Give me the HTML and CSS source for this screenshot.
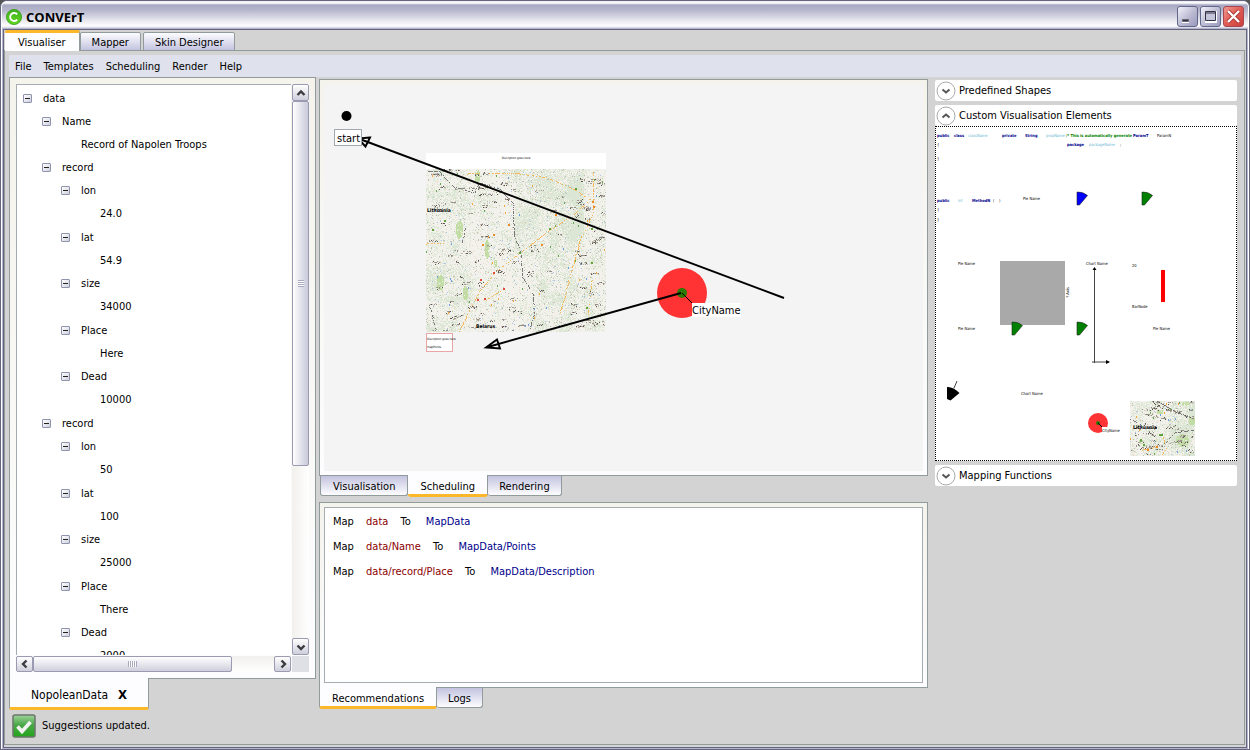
FILE: index.html
```html
<!DOCTYPE html>
<html lang="en">
<head>
<meta charset="utf-8">
<title>CONVErT</title>
<link rel="stylesheet" href="styles.css">
</head>
<body>
<div class="window">
  <header class="titlebar">
    <svg class="logo" width="16" height="16" viewBox="0 0 16 16"><defs><linearGradient id="lg" x2="0" y2="1"><stop offset="0" stop-color="#3fae1c"/><stop offset="1" stop-color="#62d820"/></linearGradient></defs><circle cx="8" cy="8" r="7.6" fill="url(#lg)" stroke="#3a9a20" stroke-width=".8"/><path d="M11.2 5.4A4 4 0 1 0 11.2 10.6" fill="none" stroke="#fff" stroke-width="1.9"/></svg>
    <h1>CONVErT</h1>
    <div class="winbtns">
      <button aria-label="Minimize"><svg width="19" height="19"><path d="M4 13h7v3H4z" fill="#fff"/><path d="M4.500 12.500h6v2h-6z" fill="#334" stroke="#667"/></svg></button>
      <button aria-label="Maximize"><svg width="19" height="19"><path d="M4 4h12v12H4z" fill="#fff"/><path d="M4.500 4.500h10v9h-10zM4 6h11" fill="#c4c4da" stroke="#334"/></svg></button>
      <button class="close" aria-label="Close"><svg width="19" height="19"><path d="M4 4l11 11M15 4L4 15" stroke="#a33" stroke-width="4"/><path d="M4 4l11 11M15 4L4 15" stroke="#fff" stroke-width="2.400"/></svg></button>
    </div>
  </header>
  <div class="client">
    <nav class="toptabs">
      <button class="on">Visualiser</button><button>Mapper</button><button>Skin Designer</button>
    </nav>
    <div class="page">
      <nav class="menu"><button>File</button><button>Templates</button><button>Scheduling</button><button>Render</button><button>Help</button></nav>
      <main class="cols">
        <section class="left">
          <div class="panel treepanel">
            <div class="tree">
              <ul>
                <li><button class="tg" aria-label="Collapse"></button><span>data</span>
                  <ul>
                    <li><button class="tg" aria-label="Collapse"></button><span>Name</span><ul><li><span>Record of Napolen Troops</span></li></ul></li>
                    <li><button class="tg" aria-label="Collapse"></button><span>record</span>
                      <ul class="fields">
                        <li><button class="tg" aria-label="Collapse"></button><span>lon</span><ul><li><span>24.0</span></li></ul></li>
                        <li><button class="tg" aria-label="Collapse"></button><span>lat</span><ul><li><span>54.9</span></li></ul></li>
                        <li><button class="tg" aria-label="Collapse"></button><span>size</span><ul><li><span>34000</span></li></ul></li>
                        <li><button class="tg" aria-label="Collapse"></button><span>Place</span><ul><li><span>Here</span></li></ul></li>
                        <li><button class="tg" aria-label="Collapse"></button><span>Dead</span><ul><li><span>10000</span></li></ul></li>
                      </ul></li>
                    <li><button class="tg" aria-label="Collapse"></button><span>record</span>
                      <ul class="fields">
                        <li><button class="tg" aria-label="Collapse"></button><span>lon</span><ul><li><span>50</span></li></ul></li>
                        <li><button class="tg" aria-label="Collapse"></button><span>lat</span><ul><li><span>100</span></li></ul></li>
                        <li><button class="tg" aria-label="Collapse"></button><span>size</span><ul><li><span>25000</span></li></ul></li>
                        <li><button class="tg" aria-label="Collapse"></button><span>Place</span><ul><li><span>There</span></li></ul></li>
                        <li><button class="tg" aria-label="Collapse"></button><span>Dead</span><ul><li><span>2000</span></li></ul></li>
                      </ul></li>
                  </ul></li>
              </ul>
            </div>
            <div class="vbar">
              <button class="sb" aria-label="Scroll up"><svg width="10" height="10"><path d="M1.500 7L5 3.500 8.500 7" /></svg></button>
              <div class="thumb"><i></i></div>
              <div class="rest"></div>
              <button class="sb" aria-label="Scroll down"><svg width="10" height="10"><path d="M1.500 3.500L5 7 8.500 3.500" /></svg></button>
            </div>
            <div class="hbar">
              <button class="sb" aria-label="Scroll left"><svg width="10" height="10"><path d="M6.500 1.500L3 5 6.500 8.500" /></svg></button>
              <div class="thumb"><i></i></div>
              <div class="rest"></div>
              <button class="sb" aria-label="Scroll right"><svg width="10" height="10"><path d="M3.500 1.500L7 5 3.500 8.500" /></svg></button>
            </div>
            <div class="corner"></div>
          </div>
          <div class="filetab"><span>NopoleanData</span><button aria-label="Close NopoleanData">X</button></div>
          <div class="status">
            <svg width="24" height="24" viewBox="0 0 24 24"><defs><linearGradient id="ok" x2="0" y2="1"><stop offset="0" stop-color="#9fd49c"/><stop offset=".45" stop-color="#4aa848"/><stop offset="1" stop-color="#22a51a"/></linearGradient></defs><rect x="1" y="1" width="22" height="22" rx="2" fill="url(#ok)" stroke="#6c756c" stroke-width="1.500"/><path d="M5.500 12.500L10 17.500 18.500 8" fill="none" stroke="#f2f2f2" stroke-width="3.600"/></svg>
            <span>Suggestions updated.</span>
          </div>
        </section>
        <section class="center">
          <div class="panel canvaspanel">
            <div class="canvas">
              <svg width="600" height="387" viewBox="324 84 600 387">
                <circle cx="346.500" cy="116" r="5"/>
                <rect x="426" y="153" width="180" height="16" fill="#fff"/>
                <text class="tiny" x="516" y="159" text-anchor="middle">Discription goes here</text>
                <g id="mapLarge" transform="translate(426 169)"></g>
                <rect x="426.500" y="333.500" width="26" height="18" fill="#fff" stroke="#eba5a5"/>
                <text class="tiny" x="427" y="340">Discription goes here</text>
                <text class="tiny" x="427" y="348">mapPoints</text>
                <circle cx="682" cy="293" r="25" fill="#ff3333"/>
                <circle cx="682" cy="293" r="5" fill="#2d7a00"/>
                <path d="M682 293l10 10" stroke="#000"/>
                <rect x="692" y="303" width="49" height="14" fill="#fff"/>
                <text class="lbl" x="692" y="314">CityName</text>
                <path d="M784 298L361 139.500M370 137.500L358 138.500 365.500 146.500zM681 293L486 347.500M497 339.500L486 347.500 500 348.500z" fill="none" stroke="#000" stroke-width="1.900"/>
                <rect x="334.500" y="129.500" width="27" height="16" fill="#fff" stroke="#a3a8ae"/>
                <text class="lbl" x="337" y="142">start</text>
              </svg>
            </div>
          </div>
          <nav class="bottabs midtabs"><button>Visualisation</button><button class="on">Scheduling</button><button>Rendering</button></nav>
          <div class="panel recpanel">
            <div class="recs">
              <p>Map <b>data</b> To <em>MapData</em></p>
              <p>Map <b>data/Name</b> To <em>MapData/Points</em></p>
              <p>Map <b>data/record/Place</b> To <em>MapData/Description</em></p>
            </div>
          </div>
          <nav class="bottabs rectabs"><button class="on">Recommendations</button><button>Logs</button></nav>
        </section>
        <aside class="right">
          <button class="exp"><svg width="20" height="20"><circle cx="10" cy="10" r="9"/><path d="M6.500 8.500L10 11.500 13.500 8.500"/></svg>Predefined Shapes</button>
          <div class="group">
            <button class="exp"><svg width="20" height="20"><circle cx="10" cy="10" r="9"/><path d="M6.500 11.500L10 8.500 13.500 11.500"/></svg>Custom Visualisation Elements</button>
            <div class="palette">
              <svg class="shapes" viewBox="1 1 300 333" width="300" height="333">
                <g class="kw"><text x="2" y="11">public</text><text x="19" y="11">class</text><text x="67" y="11">private</text><text x="90" y="11">String</text><text x="198" y="11">ParamT</text><text x="132" y="20">package</text><text x="2" y="76">public</text><text x="37" y="76">MethodN</text></g>
                <g class="id"><text x="33" y="11">className</text><text x="111" y="11">propName</text><text x="154" y="20">packageName</text><text x="23" y="76">int</text></g>
                <text class="cm" x="131" y="11">/* This is automatically generate</text>
                <g class="nm"><text x="222" y="11">ParamN</text><text x="185" y="20">;</text><text x="2" y="20">{</text><text x="2" y="34">}</text><text x="58" y="76">(</text><text x="64" y="76">)</text><text x="2" y="85">{</text><text x="2" y="95">}</text>
                <text x="88" y="74">Pie Name</text><text x="23" y="139">Pie Name</text><text x="23" y="204">Pie Name</text><text x="218" y="204">Pie Name</text><text x="151" y="139">Chart Name</text><text x="86" y="269">Chart Name</text><text x="197" y="141">20</text><text x="197" y="182">BarNode</text><text transform="translate(134 172) rotate(-90)">Y Axis</text></g>
                <rect x="65" y="135" width="65" height="64" fill="#a9a9a9"/>
                <g stroke="#222" stroke-width=".6"><path d="M142 66q6-.5 10.500 3.500l-8 9.500h-2.500z" fill="#00f"/><path d="M207 66q6-.5 10.500 3.500l-8 9.500h-2.500z" fill="#008000"/><path d="M77 196q6-.5 10.500 3.500l-8 9.500h-2.500z" fill="#008000"/><path d="M142 196q6-.5 10.500 3.500l-8 9.500h-2.500z" fill="#008000"/></g>
                <path d="M12 261q6-.5 12.500 6l-9 7.500-3.500-1.500z"/><path d="M19 262l3-7M159.500 237v-93M157 236h17" fill="none" stroke="#444"/>
                <path d="M157.500 144l2-3 2 3zM171 234l4 2-4 2z"/>
                <rect x="226" y="144" width="4" height="32" fill="#f00"/>
                <circle cx="163" cy="297" r="10" fill="#ff3333"/><circle cx="163" cy="297" r="2" fill="#2d7a00"/><path d="M163 297l4 4" stroke="#000"/><path d="M167 301h20v6h-20z" fill="#fff"/>
                <g class="nm"><text x="167" y="306">CityName</text></g>
                <g id="mapSmall" transform="translate(195 275)"></g>
              </svg>
            </div>
          </div>
          <button class="exp"><svg width="20" height="20"><circle cx="10" cy="10" r="9"/><path d="M6.500 8.500L10 11.500 13.500 8.500"/></svg>Mapping Functions</button>
        </aside>
      </main>
    </div>
  </div>
</div>
<script src="map.js"></script>
</body>
</html>
```
FILE: styles.css
```css
* { box-sizing: border-box; }
body { margin: 0; background: #555; font: 11px/14px "DejaVu Sans Condensed", "DejaVu Sans", sans-serif; color: #000; }
button { font: inherit; color: inherit; border: 0; background: none; padding: 0; margin: 0; }
svg { display: block; flex: none; }
ul { list-style: none; margin: 0; padding: 0; }
.window { display: flex; flex-direction: column; height: 100vh; min-height: 600px; border: 1px solid #65657f; border-radius: 7px 7px 0 0; background: #fff; padding: 0 1px 1px; }
.titlebar { display: flex; align-items: center; gap: 4px; height: 28px; padding: 3px 4px 0; border-radius: 6px 6px 0 0; background: linear-gradient(#e8e8f2 0, #fff 2px, #a8a8c3 4px, #b5b5cc 9px, #e5e5ec 19px, #fff 25px, #d0d0e0 27px, #9a9ab6 28px); }
.titlebar h1 { flex: 1; margin: 0; font: bold 13px/16px "Open Sans", "Noto Sans", sans-serif; }
.winbtns { display: flex; gap: 2px; }
.winbtns button { width: 21px; height: 21px; border: 1px solid #62678c; border-radius: 3px; background: linear-gradient(135deg, #f2f2fa, #b9b9d2 55%, #9a9abc); }
.winbtns .close { border-color: #a8474f; background: linear-gradient(135deg, #ef9a93, #e05b55 50%, #c93f3f); }
.client { flex: 1; min-height: 0; display: flex; flex-direction: column; border: 1px solid #65657f; outline: 1px solid #b4b4cc; background: #d3d3d3; margin: 0 1px; padding: 0 1px 2px 0; }
.toptabs { display: flex; align-items: flex-end; gap: 2px; height: 21px; margin-bottom: -1px; padding-left: 1px; z-index: 1; }
.toptabs button { height: 19px; padding: 2px 11px 0; border: 1px solid #919b9c; border-radius: 2px 2px 0 0; background: linear-gradient(#fdfdff, #c3c3e0); }
.toptabs .on { height: 21px; padding: 2px 13px 0; margin-right: -2px; border-width: 0 1px 0 0; border-top: 3px solid #fdb72b; background: #fdfdff; }
.page { flex: 1; min-height: 0; display: flex; flex-direction: column; border: 1px solid #919b9c; padding: 4px 3px 0 4px; }
.menu { display: flex; gap: 12px; height: 22px; padding: 1px 6px 0; background: #dfe2ec; }
.cols { flex: 1; min-height: 0; display: grid; grid-template-columns: 307px minmax(0, 1fr) 302px; column-gap: 3px; padding-right: 4px; }
.panel { border: 1px solid #919b9c; background: linear-gradient(#f4f3ec, #fdfdff); }
.left, .center { display: flex; flex-direction: column; min-height: 0; }
.treepanel { flex: 1; min-height: 0; display: grid; grid-template: minmax(0, 1fr) 17px / minmax(0, 1fr) 17px; padding: 6px; }
.tree { overflow: hidden; border: 1px solid #a5acb2; border-width: 1px 0 0 1px; background: #fff; padding: 2px 0 0 6px; margin-right: 1px; }
.tree span { display: inline-block; line-height: 23px; }
.tree ul ul { padding-left: 19px; }
.tree li { min-height: 23px; }
.tree li > span:first-child { margin-left: 20px; }
.fields > li:nth-child(odd) { padding-bottom: 1px; }
.tg { width: 9px; height: 9px; margin: 0 11px 2px 0; border: 1px solid #8e94ad; border-radius: 1px; background: linear-gradient(#222, #222) center / 5px 1px no-repeat, linear-gradient(135deg, #fff, #d0d0de); vertical-align: middle; }
.vbar { display: flex; flex-direction: column; background: linear-gradient(90deg, #f1f0ec, #fff); }
.hbar { display: flex; margin: 1px 1px 0 0; background: linear-gradient(#f1f0ec, #fff); }
.sb, .thumb { border: 1px solid #9a9ab0; border-radius: 2px; background: linear-gradient(#fff, #cfcfdd); display: flex; align-items: center; justify-content: center; flex: none; }
.vbar .sb { height: 17px; }
.hbar .sb { width: 17px; }
.sb path { fill: none; stroke: #3c3c40; stroke-width: 2.4; }
.vbar .thumb { flex: 364 0 0; background: linear-gradient(90deg, #fff, #c9c9da); }
.vbar .rest { flex: 173 0 0; }
.hbar .thumb { flex: 199 0 0; }
.hbar .rest { flex: 43 0 0; }
.thumb i { width: 9px; height: 6px; background: repeating-linear-gradient(90deg, #a9a9bd 0 1px, #fff 1px 2px); }
.vbar .thumb i { width: 6px; height: 7px; background: repeating-linear-gradient(#a9a9bd 0 1px, #fff 1px 2px); }
.corner { margin-top: 1px; background: #dfdfe6; }
.filetab { align-self: flex-start; display: flex; align-items: center; gap: 10px; height: 32px; margin-top: -1px; padding: 4px 21px 0; border: 1px solid #919b9c; border-width: 0 1px 3px; border-bottom-color: #fdb72b; border-radius: 0 0 2px 2px; background: #fdfdff; font-size: 12px; }
.filetab button { font-weight: bold; font-size: 13px; }
.status { display: flex; align-items: center; gap: 6px; height: 34px; padding: 0 3px 2px; }
.center { padding-top: 2px; margin-right: 4px; }
.canvaspanel { flex: 387 0 0; min-height: 0; padding: 4px; }
.canvas { height: 100%; overflow: hidden; background: #f4f4f4; }
.bottabs { display: flex; align-items: flex-start; margin-top: -1px; }
.bottabs button { height: 20px; padding: 3px 12px 0; margin-top: 1px; border: 1px solid #919b9c; border-top: 0; border-radius: 0 0 3px 3px; background: linear-gradient(#c3c3e0, #fdfdff); }
.bottabs button + button { border-left: 0; padding: 3px 11px 0; }
.bottabs button.on { height: 22px; margin-top: 0; border-bottom: 3px solid #fdb72b; background: #fdfdff; padding: 4px 12px 0; }
.midtabs { padding-left: 1px; height: 27px; }
.recpanel { flex: 176 0 0; min-height: 0; padding: 4px; }
.recs { height: 100%; border: 1px solid #a5acb2; background: #fff; padding: 1px 8px; }
.recs p { margin: 0; line-height: 25px; }
.recs b { font-weight: normal; color: #8b0000; margin: 0 9px; }
.recs em { font-style: normal; color: #00008b; margin-left: 12px; }
.rectabs { height: 57px; }
.right { display: flex; flex-direction: column; gap: 4px; padding-top: 3px; }
.exp { display: flex; align-items: center; gap: 3px; width: 100%; height: 21px; padding-left: 1px; border-radius: 2px; background: #fff; }
.exp circle { fill: #fff; stroke: #aaa; }
.exp path { fill: none; stroke: #555; stroke-width: 2; }
.palette { border: 1px dotted #000; background: #fff; overflow: hidden; }
.lbl { font-size: 11px; }
.tiny { font-size: 3px; }
.shapes { font-size: 4px; }
.kw { font-weight: bold; fill: #00008b; }
.id { fill: #6bb8d0; }
.cm { font-weight: bold; fill: #008000; }
.maptown { font-weight: bold; font-size: 5px; }
```
FILE: map.js
```js
const NS = 'http://www.w3.org/2000/svg';

function drawMap(id, w, h, opt) {
  const root = document.getElementById(id);
  let seed = opt.seed;
  const rnd = () => (seed = (seed * 16807) % 2147483647) / 2147483647;
  const layers = {};
  const dot = (c, x, y, l = 1, t = 1) => {
    if (x < 0 || y < 0 || x + l > w || y + t > h) return;
    layers[c] = (layers[c] || '') + `M${x | 0} ${y | 0}h${l}v${t}h-${l}z`;
  };
  // Smooth lattice noise shapes the forests.
  const grid = Array.from({ length: 1600 }, rnd);
  const noise = (x, y) => {
    const gx = x / 9, gy = y / 13, ix = gx | 0, iy = gy | 0, fx = gx - ix, fy = gy - iy;
    const g = (a, b) => grid[(a + b * 37) % 1600];
    return (g(ix, iy) * (1 - fx) + g(ix + 1, iy) * fx) * (1 - fy) + (g(ix, iy + 1) * (1 - fx) + g(ix + 1, iy + 1) * fx) * fy;
  };
  for (let y = 0; y < h; y++) for (let x = 0; x < w; x++) {
    const d = noise(x, y) * 0.75 + opt.forest(x, y);
    const r = rnd();
    if (r < d * d * 0.9) dot('#dce6d5', x, y);
    else if (r > 0.95) dot(rnd() < 0.5 ? '#e9dcc8' : '#bfc4b2', x, y);
    else if (r > 0.943) dot('#a9c4e6', x, y);
  }
  opt.parks.forEach(([px, py, pw, ph]) => {
    for (let y = 0; y < ph; y++) for (let x = 0; x < pw; x++) {
      const a = (x - pw / 2) / pw, b = (y - ph / 2) / ph;
      if (a * a + b * b < 0.22 && rnd() < 0.85) dot('#c1dda3', px + x, py + y);
    }
  });
  const trace = (pts, c, gap) => {
    for (let i = 1; i < pts.length; i++) {
      const [x0, y0] = pts[i - 1], [x1, y1] = pts[i];
      const n = Math.max(Math.abs(x1 - x0), Math.abs(y1 - y0));
      for (let k = 0; k < n; k++) if (rnd() > gap) dot(c, x0 + (x1 - x0) * k / n + rnd() * 0.7, y0 + (y1 - y0) * k / n);
    }
  };
  opt.roads.forEach(p => trace(p, '#f5b95c', 0.4));
  opt.borders.forEach(p => trace(p, '#777', 0.4));
  for (let i = 0; i < opt.labels; i++) {
    const x = rnd() * w, y = rnd() * h, l = 3 + rnd() * 6;
    if (x > w * 0.48 && x < w * 0.82 && rnd() < opt.thin) continue;
    for (let k = 0; k < l; k++) {
      const c = ['#5d5550', '#a09a92', '#c4beb4'][rnd() * 3 | 0];
      if (rnd() < 0.75) dot(c, x + k, y + rnd() * 3);
      if (rnd() < 0.45) dot('#958e86', x + k, y + 1);
    }
  }
  opt.marks.forEach(([c, x, y]) => dot(c, x, y, 2, 2));
  for (let i = 0; i < opt.labels / 3; i++) dot(['#f5a83c', '#6aa84f', '#6e9fe0'][i % 3], rnd() * w, rnd() * h, 1, 2);

  const bg = document.createElementNS(NS, 'rect');
  bg.setAttribute('width', w); bg.setAttribute('height', h); bg.setAttribute('fill', '#f3f1ec');
  root.append(bg);
  for (const c in layers) {
    const p = document.createElementNS(NS, 'path');
    p.setAttribute('d', layers[c]); p.setAttribute('fill', c); p.setAttribute('shape-rendering', 'crispEdges');
    root.append(p);
  }
  opt.names.forEach(([s, x, y]) => {
    const t = document.createElementNS(NS, 'text');
    t.setAttribute('x', x); t.setAttribute('y', y); t.setAttribute('class', 'maptown');
    t.textContent = s;
    root.append(t);
  });
}

drawMap('mapLarge', 180, 163, {
  seed: 4211, labels: 170, thin: 0.75,
  forest: (x, y) => (x > 88 && x < 158 && y < 85 ? 0.4 : x > 105 && x < 150 ? 0.3 : x < 45 ? 0.2 : x > 95 ? 0.12 : 0),
  parks: [[48, 0, 6, 14], [29, 50, 8, 20], [58, 70, 5, 20], [36, 116, 6, 15], [10, 105, 8, 16], [67, 90, 4, 8]],
  roads: [[[33, 162], [54, 121], [68, 104], [94, 84], [124, 61], [147, 46], [167, 28]], [[41, 5], [87, 4], [121, 9], [147, 20], [164, 31]], [[60, 131], [78, 120]], [[167, 0], [167, 44], [154, 71], [144, 107], [134, 144]], [[0, 75], [20, 74]], [[162, 145], [166, 110]]],
  borders: [[[0, 2], [14, 3], [28, 18], [48, 24], [53, 14], [74, 20], [87, 34], [88, 66], [95, 83], [96, 107], [107, 125], [108, 145], [104, 160]], [[36, 75], [40, 55]], [[3, 135], [10, 162]]],
  marks: [['#e34b3d', 67, 103], ['#e34b3d', 54, 110], ['#e34b3d', 77, 119], ['#e34b3d', 51, 130], ['#e34b3d', 58, 129], ['#ee8a22', 56, 75], ['#ee8a22', 67, 65], ['#ee8a22', 82, 55], ['#ee8a22', 115, 75], ['#ee8a22', 129, 45], ['#ee8a22', 166, 32], ['#ee8a22', 167, 37], ['#5fa23a', 93, 83], ['#5fa23a', 149, 19], ['#5fa23a', 123, 59], ['#5fa23a', 165, 59], ['#5fa23a', 165, 93], ['#5fa23a', 160, 138], ['#5fa23a', 6, 60], ['#5fa23a', 18, 51]],
  names: [['Lithuania', 1, 43], ['Belarus', 50, 159]]
});

drawMap('mapSmall', 65, 55, {
  seed: 907, labels: 50, thin: 0,
  forest: (x, y) => (x > 40 || y < 10 ? 0.4 : 0.2),
  parks: [[45, 32, 14, 14], [26, 8, 7, 5], [8, 38, 5, 5], [58, 15, 7, 9], [51, 0, 9, 5]],
  roads: [[[31, 54], [36, 47], [33, 35]], [[12, 49], [27, 46]]],
  borders: [[[27, 0], [45, 11], [64, 18]], [[0, 18], [12, 25]], [[32, 45], [44, 32], [64, 29]]],
  marks: [['#5fa23a', 10, 38], ['#5fa23a', 13, 43], ['#5fa23a', 29, 33], ['#5fa23a', 31, 33], ['#ee8a22', 17, 48], ['#ee8a22', 26, 45]],
  names: [['Lithuania', 3, 28]]
});
```
